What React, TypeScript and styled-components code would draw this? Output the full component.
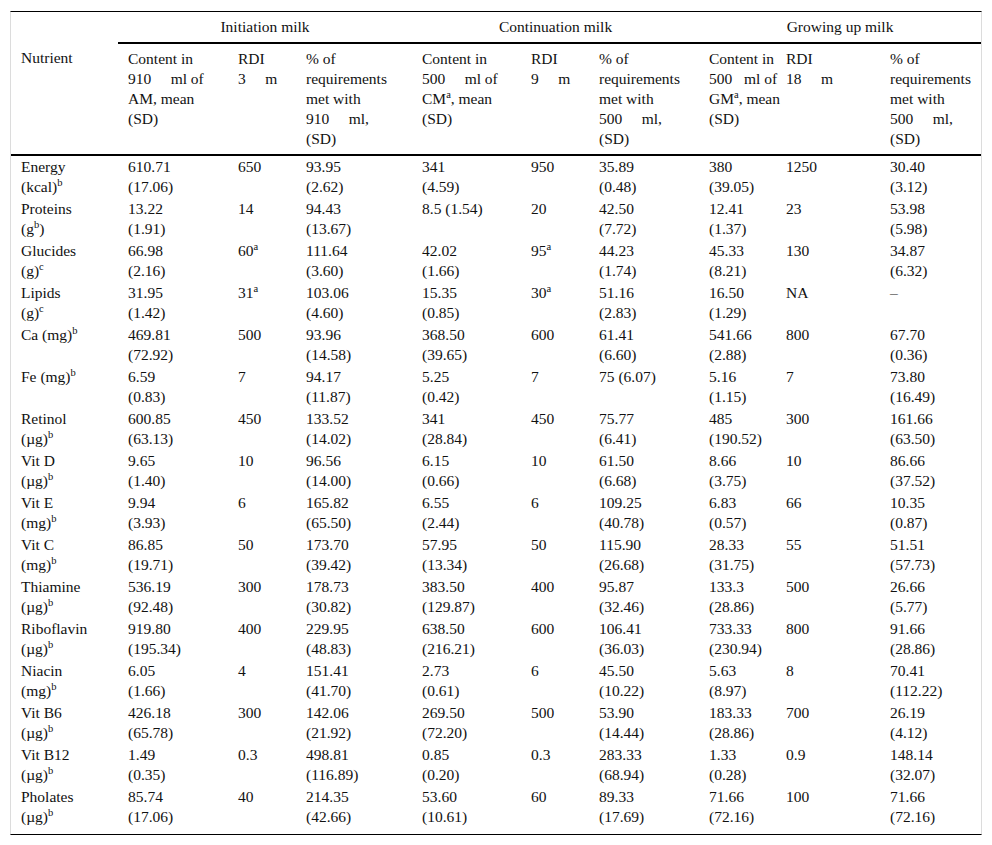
import React from 'react';
import styled, { createGlobalStyle } from 'styled-components';

const GlobalStyle = createGlobalStyle`
  html, body {
    margin: 0;
    background: #fff;
  }
  body {
    font-family: 'Liberation Serif', 'Times New Roman', serif;
    color: #111;
  }
`;

const Page = styled.div`
  padding: 11px 0 0 10px;
`;

const TableFrame = styled.div`
  width: 970px;
  border-top: 1px solid #000;
  border-bottom: 1px solid #000;
  border-left: 1px solid #dcdcdc;
  border-right: 1px solid #dcdcdc;
  padding-bottom: 6px;
`;

const Table = styled.table`
  width: 970px;
  border-collapse: collapse;
  table-layout: fixed;
  font-family: 'Liberation Serif', 'Times New Roman', serif;
  font-size: 15.5px;
  line-height: 20px;
  color: #111;
`;

const Col = styled.col<{ $w: number }>`
  width: ${(p) => p.$w}px;
`;

const HeadCell = styled.th`
  font: inherit;
  text-align: left;
  vertical-align: top;
  padding: 5px 10px;
`;

const GroupCell = styled(HeadCell)`
  text-align: center;
  border-bottom: 2px solid #000;
`;

const SubHeadCell = styled(HeadCell)`
  border-bottom: 2px solid #000;
`;

const DataCell = styled.td`
  font: inherit;
  text-align: left;
  vertical-align: top;
  padding: 1px 10px;
`;

const Line = styled.span`
  display: block;
  white-space: nowrap;
`;

const Sup = styled.sup`
  font-size: 10.5px;
  line-height: 0;
  vertical-align: baseline;
  position: relative;
  top: -0.55em;
`;

const widths = [107, 110, 68, 116, 109, 68, 110, 77, 104, 101];

const groups = ['Initiation milk', 'Continuation milk', 'Growing up milk'];

const E = '\u2003';
const N = '\u2002';

const subHeads = [
  `Content in\n910${E} ml of\nAM, mean\n(SD)`,
  `RDI\n3${E} m`,
  `% of\nrequirements\nmet with\n910${E} ml,\n(SD)`,
  `Content in\n500${E} ml of\nCM^a, mean\n(SD)`,
  `RDI\n9${E} m`,
  `% of\nrequirements\nmet with\n500${E} ml,\n(SD)`,
  `Content in\n500${N} ml of\nGM^a, mean\n(SD)`,
  `RDI\n18${E} m`,
  `% of\nrequirements\nmet with\n500${E} ml,\n(SD)`,
];

const rows: string[][] = [
  ['Energy\n(kcal)^b', '610.71\n(17.06)', '650', '93.95\n(2.62)', '341\n(4.59)', '950', '35.89\n(0.48)', '380\n(39.05)', '1250', '30.40\n(3.12)'],
  ['Proteins\n(g^b)', '13.22\n(1.91)', '14', '94.43\n(13.67)', '8.5 (1.54)', '20', '42.50\n(7.72)', '12.41\n(1.37)', '23', '53.98\n(5.98)'],
  ['Glucides\n(g)^c', '66.98\n(2.16)', '60^a', '111.64\n(3.60)', '42.02\n(1.66)', '95^a', '44.23\n(1.74)', '45.33\n(8.21)', '130', '34.87\n(6.32)'],
  ['Lipids\n(g)^c', '31.95\n(1.42)', '31^a', '103.06\n(4.60)', '15.35\n(0.85)', '30^a', '51.16\n(2.83)', '16.50\n(1.29)', 'NA', '\u2013'],
  ['Ca (mg)^b', '469.81\n(72.92)', '500', '93.96\n(14.58)', '368.50\n(39.65)', '600', '61.41\n(6.60)', '541.66\n(2.88)', '800', '67.70\n(0.36)'],
  ['Fe (mg)^b', '6.59\n(0.83)', '7', '94.17\n(11.87)', '5.25\n(0.42)', '7', '75 (6.07)', '5.16\n(1.15)', '7', '73.80\n(16.49)'],
  ['Retinol\n(\u00b5g)^b', '600.85\n(63.13)', '450', '133.52\n(14.02)', '341\n(28.84)', '450', '75.77\n(6.41)', '485\n(190.52)', '300', '161.66\n(63.50)'],
  ['Vit D\n(\u00b5g)^b', '9.65\n(1.40)', '10', '96.56\n(14.00)', '6.15\n(0.66)', '10', '61.50\n(6.68)', '8.66\n(3.75)', '10', '86.66\n(37.52)'],
  ['Vit E\n(mg)^b', '9.94\n(3.93)', '6', '165.82\n(65.50)', '6.55\n(2.44)', '6', '109.25\n(40.78)', '6.83\n(0.57)', '66', '10.35\n(0.87)'],
  ['Vit C\n(mg)^b', '86.85\n(19.71)', '50', '173.70\n(39.42)', '57.95\n(13.34)', '50', '115.90\n(26.68)', '28.33\n(31.75)', '55', '51.51\n(57.73)'],
  ['Thiamine\n(\u00b5g)^b', '536.19\n(92.48)', '300', '178.73\n(30.82)', '383.50\n(129.87)', '400', '95.87\n(32.46)', '133.3\n(28.86)', '500', '26.66\n(5.77)'],
  ['Riboflavin\n(\u00b5g)^b', '919.80\n(195.34)', '400', '229.95\n(48.83)', '638.50\n(216.21)', '600', '106.41\n(36.03)', '733.33\n(230.94)', '800', '91.66\n(28.86)'],
  ['Niacin\n(mg)^b', '6.05\n(1.66)', '4', '151.41\n(41.70)', '2.73\n(0.61)', '6', '45.50\n(10.22)', '5.63\n(8.97)', '8', '70.41\n(112.22)'],
  ['Vit B6\n(\u00b5g)^b', '426.18\n(65.78)', '300', '142.06\n(21.92)', '269.50\n(72.20)', '500', '53.90\n(14.44)', '183.33\n(28.86)', '700', '26.19\n(4.12)'],
  ['Vit B12\n(\u00b5g)^b', '1.49\n(0.35)', '0.3', '498.81\n(116.89)', '0.85\n(0.20)', '0.3', '283.33\n(68.94)', '1.33\n(0.28)', '0.9', '148.14\n(32.07)'],
  ['Pholates\n(\u00b5g)^b', '85.74\n(17.06)', '40', '214.35\n(42.66)', '53.60\n(10.61)', '60', '89.33\n(17.69)', '71.66\n(72.16)', '100', '71.66\n(72.16)'],
];

// "^a" in a string becomes a superscript a
const rich = (text: string) =>
  text.split(/(\^\w)/).map((part, i) =>
    part.startsWith('^') ? <Sup key={i}>{part.slice(1)}</Sup> : part
  );

const lines = (text: string) =>
  text.split('\n').map((l, i) => <Line key={i}>{rich(l)}</Line>);

export default function App() {
  return (
    <Page>
      <GlobalStyle />
      <TableFrame>
        <Table>
          <colgroup>
            {widths.map((w, i) => (
              <Col key={i} $w={w} />
            ))}
          </colgroup>
          <thead>
            <tr>
              <HeadCell />
              {groups.map((g) => (
                <GroupCell key={g} colSpan={3}>
                  {g}
                </GroupCell>
              ))}
            </tr>
            <tr>
              <SubHeadCell>Nutrient</SubHeadCell>
              {subHeads.map((h, i) => (
                <SubHeadCell key={i}>{lines(h)}</SubHeadCell>
              ))}
            </tr>
          </thead>
          <tbody>
            {rows.map((row, r) => (
              <tr key={r}>
                {row.map((cell, c) => (
                  <DataCell key={c}>{lines(cell)}</DataCell>
                ))}
              </tr>
            ))}
          </tbody>
        </Table>
      </TableFrame>
    </Page>
  );
}
